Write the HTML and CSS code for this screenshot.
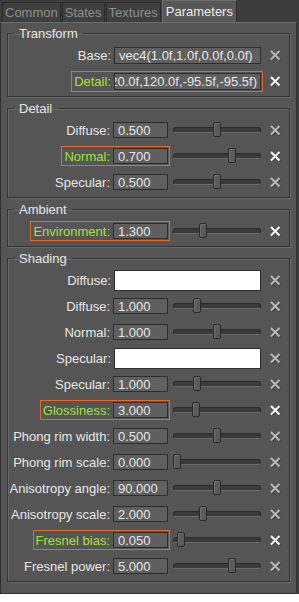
FILE: index.html
```html
<!DOCTYPE html>
<html lang="en">
<head>
  <meta charset="UTF-8" />
  <title>Material Parameters</title>
  <link rel="stylesheet" href="styles.css">
</head>
<body>
  <div class="window">
    <div class="tabs">
      <div class="tab">Common</div>
      <div class="tab">States</div>
      <div class="tab">Textures</div>
      <div class="tab active">Parameters</div>
    </div>

    <div class="panel">
      <fieldset class="group">
        <legend>Transform</legend>
        <div class="row wide">
          <div class="cell"><div class="field"><span class="label">Base:</span><span class="input vec">vec4(1.0f,1.0f,0.0f,0.0f)</span></div></div>
          <span class="reset"><svg width="11" height="11" viewBox="0 0 11 11"><path class="shadow" d="M2 2L10 10M10 2L2 10"/><path class="cross" d="M1 1L9.5 9.5M9.5 1L1 9.5"/></svg></span>
        </div>
        <div class="row wide">
          <div class="cell"><div class="field changed"><span class="label">Detail:</span><span class="input vec scrolled"><span>vec4(120.0f,120.0f,-95.5f,-95.5f)</span></span></div></div>
          <span class="reset on"><svg width="11" height="11" viewBox="0 0 11 11"><path class="shadow" d="M2 2L10 10M10 2L2 10"/><path class="cross" d="M1 1L9.5 9.5M9.5 1L1 9.5"/></svg></span>
        </div>
      </fieldset>

      <fieldset class="group">
        <legend>Detail</legend>
        <div class="row">
          <div class="cell"><div class="field"><span class="label">Diffuse:</span><span class="input">0.500</span></div></div>
          <div class="slider"><div class="rail"><span class="knob" style="left:50%"></span></div></div>
          <span class="reset"><svg width="11" height="11" viewBox="0 0 11 11"><path class="shadow" d="M2 2L10 10M10 2L2 10"/><path class="cross" d="M1 1L9.5 9.5M9.5 1L1 9.5"/></svg></span>
        </div>
        <div class="row">
          <div class="cell"><div class="field changed"><span class="label">Normal:</span><span class="input">0.700</span></div></div>
          <div class="slider"><div class="rail"><span class="knob" style="left:70%"></span></div></div>
          <span class="reset on"><svg width="11" height="11" viewBox="0 0 11 11"><path class="shadow" d="M2 2L10 10M10 2L2 10"/><path class="cross" d="M1 1L9.5 9.5M9.5 1L1 9.5"/></svg></span>
        </div>
        <div class="row">
          <div class="cell"><div class="field"><span class="label">Specular:</span><span class="input">0.500</span></div></div>
          <div class="slider"><div class="rail"><span class="knob" style="left:50%"></span></div></div>
          <span class="reset"><svg width="11" height="11" viewBox="0 0 11 11"><path class="shadow" d="M2 2L10 10M10 2L2 10"/><path class="cross" d="M1 1L9.5 9.5M9.5 1L1 9.5"/></svg></span>
        </div>
      </fieldset>

      <fieldset class="group">
        <legend>Ambient</legend>
        <div class="row">
          <div class="cell"><div class="field changed"><span class="label">Environment:</span><span class="input">1.300</span></div></div>
          <div class="slider"><div class="rail"><span class="knob" style="left:32.5%"></span></div></div>
          <span class="reset on"><svg width="11" height="11" viewBox="0 0 11 11"><path class="shadow" d="M2 2L10 10M10 2L2 10"/><path class="cross" d="M1 1L9.5 9.5M9.5 1L1 9.5"/></svg></span>
        </div>
      </fieldset>

      <fieldset class="group">
        <legend>Shading</legend>
        <div class="row wide">
          <div class="cell"><div class="field"><span class="label">Diffuse:</span><span class="swatch"></span></div></div>
          <span class="reset"><svg width="11" height="11" viewBox="0 0 11 11"><path class="shadow" d="M2 2L10 10M10 2L2 10"/><path class="cross" d="M1 1L9.5 9.5M9.5 1L1 9.5"/></svg></span>
        </div>
        <div class="row">
          <div class="cell"><div class="field"><span class="label">Diffuse:</span><span class="input">1.000</span></div></div>
          <div class="slider"><div class="rail"><span class="knob" style="left:25%"></span></div></div>
          <span class="reset"><svg width="11" height="11" viewBox="0 0 11 11"><path class="shadow" d="M2 2L10 10M10 2L2 10"/><path class="cross" d="M1 1L9.5 9.5M9.5 1L1 9.5"/></svg></span>
        </div>
        <div class="row">
          <div class="cell"><div class="field"><span class="label">Normal:</span><span class="input">1.000</span></div></div>
          <div class="slider"><div class="rail"><span class="knob" style="left:50%"></span></div></div>
          <span class="reset"><svg width="11" height="11" viewBox="0 0 11 11"><path class="shadow" d="M2 2L10 10M10 2L2 10"/><path class="cross" d="M1 1L9.5 9.5M9.5 1L1 9.5"/></svg></span>
        </div>
        <div class="row wide">
          <div class="cell"><div class="field"><span class="label">Specular:</span><span class="swatch"></span></div></div>
          <span class="reset"><svg width="11" height="11" viewBox="0 0 11 11"><path class="shadow" d="M2 2L10 10M10 2L2 10"/><path class="cross" d="M1 1L9.5 9.5M9.5 1L1 9.5"/></svg></span>
        </div>
        <div class="row">
          <div class="cell"><div class="field"><span class="label">Specular:</span><span class="input">1.000</span></div></div>
          <div class="slider"><div class="rail"><span class="knob" style="left:25%"></span></div></div>
          <span class="reset"><svg width="11" height="11" viewBox="0 0 11 11"><path class="shadow" d="M2 2L10 10M10 2L2 10"/><path class="cross" d="M1 1L9.5 9.5M9.5 1L1 9.5"/></svg></span>
        </div>
        <div class="row">
          <div class="cell"><div class="field changed"><span class="label">Glossiness:</span><span class="input">3.000</span></div></div>
          <div class="slider"><div class="rail"><span class="knob" style="left:24%"></span></div></div>
          <span class="reset on"><svg width="11" height="11" viewBox="0 0 11 11"><path class="shadow" d="M2 2L10 10M10 2L2 10"/><path class="cross" d="M1 1L9.5 9.5M9.5 1L1 9.5"/></svg></span>
        </div>
        <div class="row">
          <div class="cell"><div class="field"><span class="label">Phong rim width:</span><span class="input">0.500</span></div></div>
          <div class="slider"><div class="rail"><span class="knob" style="left:50%"></span></div></div>
          <span class="reset"><svg width="11" height="11" viewBox="0 0 11 11"><path class="shadow" d="M2 2L10 10M10 2L2 10"/><path class="cross" d="M1 1L9.5 9.5M9.5 1L1 9.5"/></svg></span>
        </div>
        <div class="row">
          <div class="cell"><div class="field"><span class="label">Phong rim scale:</span><span class="input">0.000</span></div></div>
          <div class="slider"><div class="rail"><span class="knob" style="left:0%"></span></div></div>
          <span class="reset"><svg width="11" height="11" viewBox="0 0 11 11"><path class="shadow" d="M2 2L10 10M10 2L2 10"/><path class="cross" d="M1 1L9.5 9.5M9.5 1L1 9.5"/></svg></span>
        </div>
        <div class="row">
          <div class="cell"><div class="field"><span class="label">Anisotropy angle:</span><span class="input">90.000</span></div></div>
          <div class="slider"><div class="rail"><span class="knob" style="left:50%"></span></div></div>
          <span class="reset"><svg width="11" height="11" viewBox="0 0 11 11"><path class="shadow" d="M2 2L10 10M10 2L2 10"/><path class="cross" d="M1 1L9.5 9.5M9.5 1L1 9.5"/></svg></span>
        </div>
        <div class="row">
          <div class="cell"><div class="field"><span class="label">Anisotropy scale:</span><span class="input">2.000</span></div></div>
          <div class="slider"><div class="rail"><span class="knob" style="left:33%"></span></div></div>
          <span class="reset"><svg width="11" height="11" viewBox="0 0 11 11"><path class="shadow" d="M2 2L10 10M10 2L2 10"/><path class="cross" d="M1 1L9.5 9.5M9.5 1L1 9.5"/></svg></span>
        </div>
        <div class="row">
          <div class="cell"><div class="field changed"><span class="label">Fresnel bias:</span><span class="input">0.050</span></div></div>
          <div class="slider"><div class="rail"><span class="knob" style="left:5%"></span></div></div>
          <span class="reset on"><svg width="11" height="11" viewBox="0 0 11 11"><path class="shadow" d="M2 2L10 10M10 2L2 10"/><path class="cross" d="M1 1L9.5 9.5M9.5 1L1 9.5"/></svg></span>
        </div>
        <div class="row">
          <div class="cell"><div class="field"><span class="label">Fresnel power:</span><span class="input">5.000</span></div></div>
          <div class="slider"><div class="rail"><span class="knob" style="left:70%"></span></div></div>
          <span class="reset"><svg width="11" height="11" viewBox="0 0 11 11"><path class="shadow" d="M2 2L10 10M10 2L2 10"/><path class="cross" d="M1 1L9.5 9.5M9.5 1L1 9.5"/></svg></span>
        </div>
      </fieldset>
    </div>
  </div>
</body>
</html>
```

FILE: styles.css
```css
body {
  margin: 0;
  background: #fff;
  font-family: "Liberation Sans", Arial, sans-serif;
  font-size: 13px;
}

.window {
  width: 299px;
  height: 594px;
  background: #3c3c3c;
  display: flex;
  flex-direction: column;
}

/* tab strip */
.tabs {
  display: flex;
  height: 22px;
  padding-left: 2px;
  align-items: flex-end;
}

.tab {
  height: 20px;
  line-height: 20px;
  padding: 0 2px;
  color: #8e8e8e;
  background: #3f3f3f;
  border: 1px solid #2b2b2b;
  border-bottom: none;
  margin-right: 1px;
  box-sizing: border-box;
}

.tab.active {
  height: 22px;
  line-height: 21px;
  color: #ececec;
  background: #585858;
  border-color: #6e6e6e #2b2b2b transparent #6e6e6e;
  padding: 0 3px;
  margin-right: 0;
}

/* main panel */
.panel {
  flex: 1;
  width: 297px;
  box-sizing: border-box;
  background: #555;
  border: 1px solid #2f2f2f;
  border-top-color: #6a6a6a;
  padding: 3px 6px 0 6px;
}

.group {
  margin: 0 0 4px 0;
  padding: 1px 0 2px 0;
  border: 1px solid #353535;
  box-shadow: inset 1px 1px 0 #676767, 1px 1px 0 #676767;
}

.group legend {
  color: #e6e6e6;
  padding: 0 5px;
  margin-left: 6px;
  line-height: 15px;
}

.row {
  display: grid;
  grid-template-columns: 162px 93px 1fr;
  height: 26px;
  align-items: center;
}

.row.wide .cell {
  grid-column: 1 / 3;
}

.cell {
  display: flex;
  justify-content: flex-end;
}

.field {
  display: flex;
  align-items: center;
  gap: 3px;
  padding: 1px 1px 1px 2px;
  border: 1px solid transparent;
}

.field.changed {
  border-color: #e4692d;
}

.label {
  color: #e8e8e8;
  white-space: nowrap;
}

.field.changed .label {
  color: #a4e23a;
}

.input {
  display: flex;
  align-items: center;
  width: 55px;
  height: 16px;
  box-sizing: border-box;
  padding: 0 4px;
  background: #5f5f5f;
  border: 1px solid #2e2e2e;
  color: #e6e6e6;
  white-space: nowrap;
  overflow: hidden;
}

.input.vec {
  width: 147px;
  height: 17px;
}

.input.scrolled {
  justify-content: flex-end;
  padding: 0 3px 0 0;
}

.swatch {
  width: 147px;
  height: 21px;
  box-sizing: border-box;
  background: #fff;
  border: 1px solid #2e2e2e;
}

/* slider */
.slider {
  margin-left: 3px;
  width: 88px;
  height: 6px;
  box-sizing: border-box;
  background: #3b3b3b;
  border: 1px solid #2c2c2c;
  border-bottom-color: #6a6a6a;
  border-radius: 3px;
}

.rail {
  position: relative;
  margin: 0 4px 0 3px;
  height: 100%;
}

.knob {
  position: absolute;
  top: -6px;
  width: 8px;
  height: 15px;
  margin-left: -4px;
  box-sizing: border-box;
  background: #5a5a5a;
  border: 1px solid #2a2a2a;
  border-radius: 2px;
  box-shadow: inset 1px 1px 0 #707070;
}

/* reset cross */
.reset {
  display: flex;
  padding-left: 7px;
}

.reset svg {
  stroke-width: 2;
  fill: none;
}

.reset .shadow {
  stroke: #3a3a3a;
}

.reset .cross {
  stroke: #b8b8b8;
}

.reset.on .cross {
  stroke: #fafafa;
}
```
